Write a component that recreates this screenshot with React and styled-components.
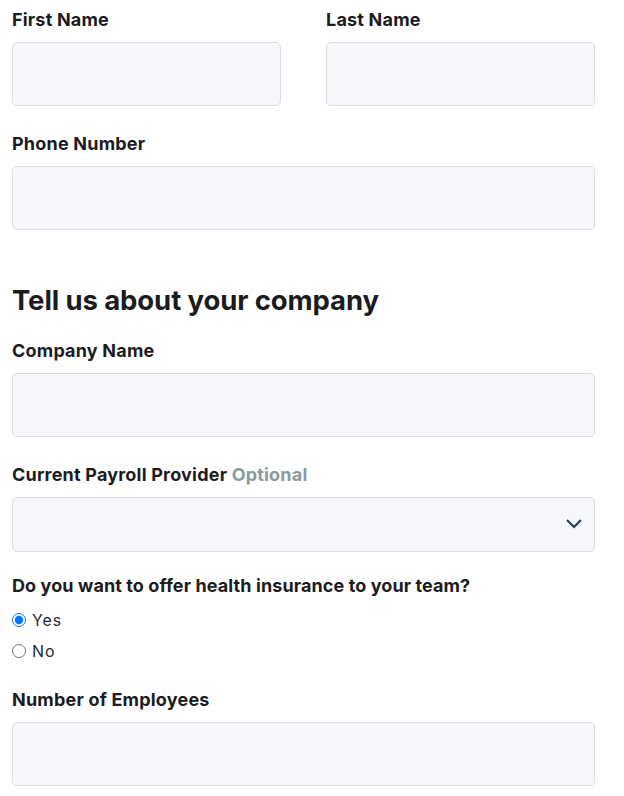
import React, { useState } from 'react'
import styled, { createGlobalStyle } from 'styled-components'

const Global = createGlobalStyle`
  body {
    margin: 0;
    background: #ffffff;
    font-family: Inter, "Noto Sans", sans-serif;
    color: #1c1c1f;
  }
`

const Form = styled.form`
  width: 583px;
  padding: 7px 0 0 12px;
  display: flex;
  flex-direction: column;
`

const Row = styled.div`
  display: grid;
  grid-template-columns: minmax(0, 1fr) minmax(0, 1fr);
  column-gap: 45px;
`

const Field = styled.div`
  display: flex;
  flex-direction: column;
  min-width: 0;
  margin-bottom: ${props => props.mb || 25}px;
`

const Label = styled.label`
  font-size: 18px;
  font-weight: 700;
  line-height: 24px;
  padding-top: 1px;
  margin-bottom: 10px;
  color: #1c1c1f;
  letter-spacing: 0.2px;
`

const Optional = styled.span`
  color: #879ba0;
`

const Input = styled.input`
  width: 100%;
  height: 64px;
  box-sizing: border-box;
  background: #f6f7fb;
  border: 1px solid #dcdde3;
  border-radius: 5px;
  padding: 0 14px;
  font-size: 16px;
  font-family: inherit;
  outline: none;
`

const SelectWrap = styled.div`
  position: relative;
  height: 55px;
`

const Select = styled.select`
  width: 100%;
  height: 100%;
  box-sizing: border-box;
  appearance: none;
  background: #f6f7fb;
  border: 1px solid #dcdde3;
  border-radius: 5px;
  padding: 0 14px;
  font-size: 16px;
  font-family: inherit;
  outline: none;
`

const Chevron = styled.svg`
  position: absolute;
  right: 12px;
  top: 21px;
  pointer-events: none;
`

const Heading = styled.h2`
  font-size: 27.5px;
  font-weight: 700;
  margin: 29px 0 22px;
  line-height: 32px;
  letter-spacing: -0.1px;
`

const Question = styled.div`
  font-size: 18px;
  font-weight: 700;
  line-height: 24px;
  padding-top: 1px;
  margin-bottom: 6px;
  letter-spacing: 0.1px;
`

const RadioRow = styled.label`
  display: flex;
  align-items: center;
  height: 31px;
  font-size: 16px;
  letter-spacing: 0.9px;
  color: #2a2a2e;

  input {
    margin: 0 6px 0 0;
    width: 14px;
    height: 14px;
  }
`

const Radios = styled.div`
  display: flex;
  flex-direction: column;
  margin-bottom: 21px;
`

export default function App() {
  const [health, setHealth] = useState('yes')
  return (
    <>
      <Global />
      <Form>
        <Row>
          <Field>
            <Label>First Name</Label>
            <Input />
          </Field>
          <Field>
            <Label>Last Name</Label>
            <Input />
          </Field>
        </Row>
        <Field>
          <Label>Phone Number</Label>
          <Input />
        </Field>
        <Heading>Tell us about your company</Heading>
        <Field>
          <Label>Company Name</Label>
          <Input />
        </Field>
        <Field mb={21}>
          <Label>
            Current Payroll Provider <Optional>Optional</Optional>
          </Label>
          <SelectWrap>
            <Select defaultValue="">
              <option value=""></option>
            </Select>
            <Chevron width="18" height="12" viewBox="0 0 18 12">
              <path d="M2 2l7 7 7-7" fill="none" stroke="#1f3b4a" strokeWidth="2" />
            </Chevron>
          </SelectWrap>
        </Field>
        <Question>Do you want to offer health insurance to your team?</Question>
        <Radios>
          <RadioRow>
            <input type="radio" name="health" checked={health === 'yes'} onChange={() => setHealth('yes')} />
            Yes
          </RadioRow>
          <RadioRow>
            <input type="radio" name="health" checked={health === 'no'} onChange={() => setHealth('no')} />
            No
          </RadioRow>
        </Radios>
        <Field>
          <Label>Number of Employees</Label>
          <Input />
        </Field>
      </Form>
    </>
  )
}
